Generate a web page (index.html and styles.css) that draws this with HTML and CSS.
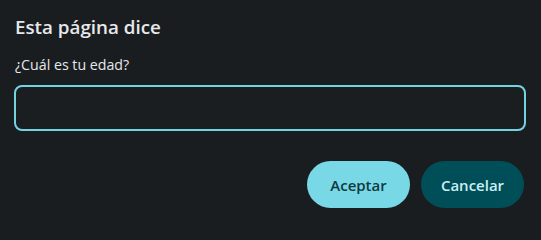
FILE: index.html
```html
<!DOCTYPE html>
<html lang="es">
<head>
<meta charset="utf-8">
<link rel="stylesheet" href="styles.css">
</head>
<body>
<div class="dialog">
  <h1 class="title">Esta página dice</h1>
  <p class="message">¿Cuál es tu edad?</p>
  <div class="field"></div>
  <div class="actions">
    <button class="btn btn-primary">Aceptar</button>
    <button class="btn btn-secondary">Cancelar</button>
  </div>
</div>
</body>
</html>
```
FILE: styles.css
```css
html, body {
  margin: 0;
  padding: 0;
  background: #191d20;
}
body {
  font-family: "Open Sans", "Noto Sans", sans-serif;
  color: #e6e8eb;
}
.dialog {
  width: 541px;
  height: 221px;
  box-sizing: border-box;
  padding: 14px 15px 13px 14px;
  display: flex;
  flex-direction: column;
}
.title {
  margin: 0 0 0 1px;
  font-size: 18.8px;
  font-weight: 600;
  line-height: 26px;
}
.message {
  margin: 15px 0 0 1px;
  font-size: 14.2px;
  line-height: 20px;
}
.field {
  margin-top: 10px;
  height: 46px;
  box-sizing: border-box;
  border: 2px solid #74d3e2;
  border-radius: 8px;
  background: #1a1e21;
}
.actions {
  margin-top: 30px;
  display: flex;
  justify-content: flex-end;
  gap: 11px;
  padding-right: 2px;
}
.btn {
  width: 103px;
  height: 47px;
  border: none;
  border-radius: 24px;
  font-family: inherit;
  font-size: 15px;
  font-weight: 600;
  padding: 0;
}
.btn-primary {
  background: #78d8e6;
  color: #0e3a40;
}
.btn-secondary {
  background: #004f58;
  color: #cbeff4;
}
```
